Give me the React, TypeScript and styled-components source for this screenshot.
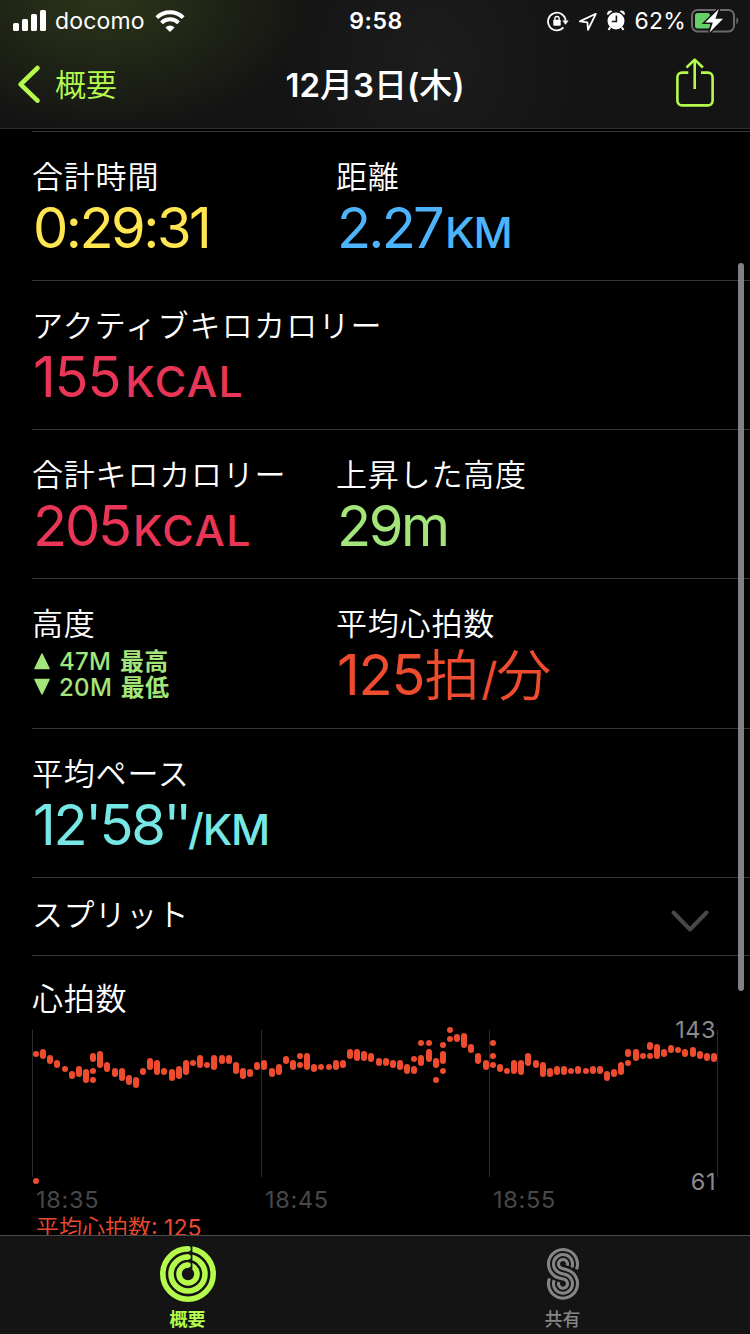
import React from "react";
import styled, { createGlobalStyle } from "styled-components";

const GlobalStyle = createGlobalStyle`
  * { box-sizing: border-box; }
  body {
    margin: 0;
    background: #000;
    font-family: Inter, "Noto Sans CJK JP", sans-serif;
    color: #fff;
  }
`;

const LIME = "#b4fb4c";

const Screen = styled.div`
  position: relative;
  display: flex;
  flex-direction: column;
  width: 750px;
  height: 1334px;
  overflow: hidden;
  background: #000;
`;

const Header = styled.header`
  flex: none;
  height: 129px;
  border-bottom: 1px solid #2c2c2c;
  background:
    radial-gradient(ellipse 210px 130px at 105px 0, rgba(52, 64, 26, 0.75), rgba(52, 64, 26, 0)),
    radial-gradient(ellipse 150px 160px at 430px 60px, rgba(34, 34, 34, 0.6), rgba(34, 34, 34, 0)),
    #141414;
`;

const StatusBar = styled.div`
  display: grid;
  grid-template-columns: 1fr auto 1fr;
  align-items: center;
  height: 40px;
  padding: 0 11px 0 13px;
  font-size: 23px;
  line-height: 42px;
`;

const StatusGroup = styled.div<{ $end?: boolean }>`
  display: flex;
  align-items: center;
  justify-content: ${(p) => (p.$end ? "flex-end" : "flex-start")};
  height: 40px;
  svg { flex: none; }
`;

const Carrier = styled.span`
  margin: 0 10px 0 8px;
  letter-spacing: 0.15px;
`;

const Clock = styled.span`
  font-weight: 600;
  letter-spacing: 0.6px;
`;

const StatusIcons = styled.div`
  display: flex;
  gap: 9px;
  margin-right: 10px;
`;

const Percent = styled.span`
  margin-right: 5px;
  letter-spacing: 0.2px;
`;

const NavBar = styled.nav`
  display: grid;
  grid-template-columns: 1fr auto 1fr;
  align-items: center;
  height: 88px;
  padding: 0 17px;
`;

const BackButton = styled.div`
  display: flex;
  align-items: center;
  gap: 13px;
  color: ${LIME};
  font-size: 31px;
  font-weight: 350;
  line-height: 44px;
  span { padding-top: 2px; }
`;

const Title = styled.h1`
  margin: 0;
  font-size: 33px;
  font-weight: 600;
  line-height: 44px;
`;

const Kanji = styled.span<{ $weight?: number }>`
  font-family: "Noto Sans CJK JP", sans-serif;
  font-weight: ${(p) => p.$weight ?? 500};
`;

const ShareButton = styled.div`
  justify-self: end;
  height: 50px;
  margin: -2px 18px 0 0;
`;

const Content = styled.main`
  flex: 1;
  min-height: 0;
  overflow: hidden;
  padding: 2px 0 0 32px;
`;

const MetricRow = styled.section<{ $height: number }>`
  display: grid;
  grid-template-columns: 304px 1fr;
  height: ${(p) => p.$height}px;
  border-top: 1px solid #363638;
  padding-top: 24px;
`;

const Label = styled.div<{ $track?: number }>`
  font-family: "Noto Sans CJK JP", sans-serif;
  font-size: 31px;
  font-weight: 350;
  line-height: 38px;
  letter-spacing: ${(p) => p.$track ?? 0.8}px;
  white-space: nowrap;
`;

const Value = styled.div<{ $color: string; $track?: number }>`
  padding: 1px 0 0 1px;
  color: ${(p) => p.$color};
  font-size: 56px;
  line-height: 66px;
  letter-spacing: ${(p) => p.$track ?? -1.2}px;
  white-space: nowrap;
`;

const Unit = styled.span<{ $track?: number; $gap?: number }>`
  margin-left: ${(p) => p.$gap ?? 3}px;
  font-size: 43px;
  font-weight: 450;
  letter-spacing: ${(p) => p.$track ?? 1.4}px;
`;

const Slash = styled.span`
  margin: 0 0 0 3px;
  font-size: 45px;
`;

const Seconds = styled.span`
  letter-spacing: -5px;
`;

const KanjiUnit = styled.span`
  font-weight: 350;
  font-size: 55px;
  line-height: 1;
`;

const Extremes = styled.div`
  padding-top: 7px;
  color: #a3e57a;
`;

const Extreme = styled.div`
  display: flex;
  align-items: center;
  gap: 9px;
  height: 26px;
  padding-left: 2px;
  font-size: 24px;
  font-weight: 500;
  line-height: 26px;
  letter-spacing: 0.3px;
  word-spacing: 2px;
  white-space: nowrap;
`;

const SplitRow = styled.section`
  display: flex;
  justify-content: space-between;
  height: 78px;
  border-top: 1px solid #363638;
  padding: 16px 41px 0 0;
  svg { margin-top: 15px; }
`;

const ChartSection = styled.section`
  border-top: 1px solid #363638;
  padding-top: 22px;
`;

const ChartArea = styled.div`
  position: relative;
  width: 686px;
  height: 168px;
  margin-top: 2px;
  svg { display: block; overflow: visible; }
`;

const AxisValue = styled.span<{ $top: number }>`
  position: absolute;
  top: ${(p) => p.$top}px;
  right: 2px;
  color: #8a8a8d;
  font-size: 23.5px;
  line-height: 28px;
  letter-spacing: 0.5px;
`;

const TimeAxis = styled.div`
  display: grid;
  grid-template-columns: 229px 228px 1fr;
  padding-left: 4px;
  color: #48484a;
  font-size: 23.5px;
  line-height: 28px;
  letter-spacing: 0.7px;
`;

const Average = styled.div`
  padding-left: 4px;
  color: #ea4a2e;
  font-size: 23px;
  font-weight: 350;
  line-height: 28px;
  white-space: nowrap;
  span { font-weight: 400; }
`;

const ScrollThumb = styled.div`
  position: absolute;
  top: 263px;
  right: 6px;
  width: 6px;
  height: 728px;
  border-radius: 3px;
  background: rgba(140, 140, 143, 0.92);
`;

const TabBar = styled.footer`
  flex: none;
  display: grid;
  grid-template-columns: 1fr 1fr;
  height: 99px;
  border-top: 1px solid #4a4a4c;
  background: #141414;
`;

const Tab = styled.div<{ $active?: boolean }>`
  display: flex;
  flex-direction: column;
  align-items: center;
  padding-top: 9px;
  color: ${(p) => (p.$active ? LIME : "#858585")};
  font-family: "Noto Sans CJK JP", sans-serif;
  font-size: 18px;
  font-weight: ${(p) => (p.$active ? 700 : 500)};
  line-height: 26px;
  svg { margin-bottom: 2px; }
`;

/* Each entry is one time slot holding [top, bottom] ranges, in thirds of a pixel. */
const beats: number[][][] = [
  [[123, 141], [504, 522]], [[117, 147]], [[135, 162]], [[150, 174]], [[168, 186]], [[183, 207]],
  [[168, 201]], [[177, 219]], [[129, 156], [174, 192], [201, 219]], [[123, 174]], [[156, 186]],
  [[174, 201]], [[174, 213]], [[195, 225]], [[201, 234]], [[174, 195]], [[144, 180]], [[150, 195]],
  [[174, 195]], [[177, 213]], [[168, 207]], [[150, 195]], [[150, 168]], [[135, 174]], [[156, 174]],
  [[135, 180]], [[135, 162]], [[135, 162]], [[156, 192]], [[174, 207]], [[177, 201]], [[156, 180]],
  [[150, 180]], [[174, 201]], [[162, 195]], [[138, 162]], [[150, 180]], [[129, 147], [156, 174]],
  [[129, 180]], [[162, 186]], [[162, 180]], [[162, 180]], [[150, 180]], [[150, 174]], [[117, 147]],
  [[117, 153]], [[123, 153]], [[129, 156]], [[144, 168]], [[144, 168]], [[150, 174]], [[150, 180]],
  [[162, 192]], [[138, 156], [168, 192]], [[90, 108], [135, 168]], [[90, 108], [117, 156]],
  [[144, 174], [201, 219]], [[96, 114], [123, 162], [174, 192]], [[51, 69], [78, 96]], [[72, 96]],
  [[69, 114]], [[102, 129]], [[129, 162]], [[150, 180]], [[90, 108], [129, 147], [156, 174]],
  [[162, 186]], [[174, 192]], [[150, 192]], [[150, 195]], [[129, 168]], [[150, 174]], [[156, 201]],
  [[174, 201]], [[168, 195]], [[168, 195]], [[174, 192]], [[168, 192]], [[174, 192]], [[168, 192]],
  [[168, 192]], [[183, 213]], [[177, 201]], [[156, 195]], [[117, 141], [150, 168]], [[117, 153]],
  [[129, 147]], [[96, 120], [129, 147]], [[102, 147]], [[117, 141]], [[105, 129]], [[111, 129]],
  [[117, 141]], [[111, 141]], [[123, 147]], [[129, 153]], [[129, 156]],
];

const HeartChart = () => (
  <svg width="686" height="168" viewBox="0 0 686 168">
    {[0, 229, 457, 685].map((x) => (
      <rect key={x} x={x} y="12" width="1" height="147" fill="#2b2b2d" />
    ))}
    {beats.flatMap((slot, i) =>
      slot.map(([a, b], j) => (
        <rect
          key={`${i}-${j}`}
          x={Math.round(4 + i * 7.137) - 3}
          y={a / 3 - 8}
          width="6"
          height={(b - a) / 3}
          rx="3"
          fill="#ee4b2f"
        />
      ))
    )}
  </svg>
);

const SignalIcon = () => (
  <svg width="34" height="40" fill="#fff">
    <rect x="0" y="22" width="6" height="8" rx="1.5" />
    <rect x="9" y="18" width="6" height="12" rx="1.5" />
    <rect x="18" y="13" width="6" height="17" rx="1.5" />
    <rect x="27" y="9" width="6" height="21" rx="1.5" />
  </svg>
);

const WifiIcon = () => (
  <svg width="30" height="40" fill="none" stroke="#fff" strokeWidth="4">
    <path d="M1.8 16.6a18.8 18.8 0 0 1 26.4 0" />
    <path d="M6.5 21.8a12 12 0 0 1 17 0" strokeWidth="3.8" />
    <path d="M15 31l-4.6-4.6a6.5 6.5 0 0 1 9.2 0z" fill="#fff" stroke="none" />
  </svg>
);

const RotationLockIcon = () => (
  <svg width="22" height="40" fill="none" stroke="#fff" strokeWidth="1.8">
    <path d="M16.4 26.4a8.8 8.8 0 1 1 2.2-6.8" />
    <path d="M15.4 19.4h6.2l-3.1 4.4z" fill="#fff" stroke="none" />
    <rect x="6.3" y="18.8" width="7.4" height="6" rx="0.8" fill="#fff" stroke="none" />
    <path d="M7.9 19.3v-1.7a2.1 2.1 0 0 1 4.2 0v1.7" strokeWidth="1.4" />
  </svg>
);

const LocationIcon = () => (
  <svg width="20" height="40" fill="none" stroke="#fff" strokeWidth="1.8" strokeLinejoin="round">
    <path d="M17.8 12.8L1.8 20.4l7.6.9.6 7.6z" />
  </svg>
);

const AlarmIcon = () => (
  <svg width="18" height="40">
    <circle cx="9" cy="20" r="8.5" fill="#fff" />
    <path d="M.6 14.2a3.2 3.2 0 0 1 4.8-4zM17.4 14.2a3.2 3.2 0 0 0-4.8-4z" fill="#fff" />
    <path d="M3.4 26.4L1.4 28.8M14.6 26.4l2 2.4" stroke="#fff" strokeWidth="2" />
    <path d="M9.4 14.5v6H4.8" fill="none" stroke="#181818" strokeWidth="1.6" />
  </svg>
);

const BatteryIcon = () => (
  <svg width="48" height="40">
    <rect x="1" y="9" width="42" height="21.4" rx="5.5" fill="none" stroke="#6b6b6b" strokeWidth="2" />
    <path d="M45.4 16.4c2.4 1 2.4 5.6 0 6.6z" fill="#6b6b6b" />
    <rect x="4" y="12" width="15" height="15.4" rx="2.5" fill="#65d06a" />
    <path
      d="M27.8 8L14.2 21.6h7.6L18.6 31.4L32 17.8h-7.6z"
      fill="#fff"
      stroke="#161616"
      strokeWidth="3"
      paintOrder="stroke"
    />
  </svg>
);

const BackIcon = () => (
  <svg width="25" height="44" fill="none" stroke={LIME} strokeWidth="4.6" strokeLinecap="round" strokeLinejoin="round">
    <path d="M20.5 6L3.6 22.3l16.9 16.3" />
  </svg>
);

const ShareIcon = () => (
  <svg width="40" height="50" fill="none" stroke={LIME} strokeWidth="2.6" strokeLinejoin="round">
    <path d="M13.3 14.6H7a4.6 4.6 0 0 0-4.6 4.6v23.6A4.6 4.6 0 0 0 7 47.4h26a4.6 4.6 0 0 0 4.6-4.6V19.2A4.6 4.6 0 0 0 33 14.6h-7" />
    <path d="M19.7 31V2M11.500 9.500L19.700 1.600l8.200 7.900" />
  </svg>
);

const ChevronDown = () => (
  <svg width="38" height="24" fill="none" stroke="#48484a" strokeWidth="4" strokeLinecap="round" strokeLinejoin="round">
    <path d="M2.5 3.5L19 20.5l16.5-17" />
  </svg>
);

const radii = [25.2, 17, 9];

const RingsIcon = () => (
  <svg width="58" height="58" viewBox="0 0 58 58">
    {radii.map((r) => (
      <circle key={r} cx="29" cy="29" r={r} fill="none" stroke={LIME} strokeWidth="5.6" />
    ))}
    <rect x="29" y="0" width="4.4" height="24" fill="#141414" />
    {radii.map((r) => (
      <circle key={r} cx="29" cy={29 - r} r="2.8" fill={LIME} />
    ))}
  </svg>
);

const sharingStrand = (upper: number, lower: number) => {
  const nx = -0.264;
  const ny = 0.9645;
  const [cx, top, bottom] = [17, 17, 36.7];
  const sweep = 0.38;
  const ux = cx + upper * Math.cos(sweep);
  const uy = top + upper * Math.sin(sweep);
  const lx = cx - lower * Math.cos(sweep);
  const ly = bottom - lower * Math.sin(sweep);
  return `M${ux} ${uy}A${upper} ${upper} 0 1 0 ${cx + upper * nx} ${top + upper * ny}L${cx - lower * nx} ${
    bottom - lower * ny
  }A${lower} ${lower} 0 1 1 ${lx} ${ly}`;
};

const SharingIcon = () => (
  <svg width="34" height="58" viewBox="0 -2 34 58" fill="none" stroke="#858585" strokeWidth="3.1">
    <path d={sharingStrand(14.5, 4.5)} />
    <path d={sharingStrand(9.5, 9.5)} />
    <path d={sharingStrand(4.5, 14.5)} />
  </svg>
);

const Triangle = ({ down }: { down?: boolean }) => (
  <svg width="16" height="18" fill="#a3e57a" stroke="#a3e57a" strokeWidth="1.5" strokeLinejoin="round">
    <path d={down ? "M1 1.5h14L8 16z" : "M1 16.5h14L8 2z"} />
  </svg>
);

export default function App() {
  return (
    <Screen>
      <GlobalStyle />
      <Header>
        <StatusBar>
          <StatusGroup>
            <SignalIcon />
            <Carrier>docomo</Carrier>
            <WifiIcon />
          </StatusGroup>
          <Clock>9:58</Clock>
          <StatusGroup $end>
            <StatusIcons>
              <RotationLockIcon />
              <LocationIcon />
              <AlarmIcon />
            </StatusIcons>
            <Percent>62%</Percent>
            <BatteryIcon />
          </StatusGroup>
        </StatusBar>
        <NavBar>
          <BackButton>
            <BackIcon />
            <span>概要</span>
          </BackButton>
          <Title>
            12<Kanji>月</Kanji>3<Kanji>日</Kanji>(<Kanji>木</Kanji>)
          </Title>
          <ShareButton>
            <ShareIcon />
          </ShareButton>
        </NavBar>
      </Header>

      <Content>
        <MetricRow $height={149}>
          <div>
            <Label>合計時間</Label>
            <Value $color="#ffe650" $track={-2.5}>0:29:31</Value>
          </div>
          <div>
            <Label>距離</Label>
            <Value $color="#4db3fa" $track={-2.8}>
              2.27<Unit $track={-1}>KM</Unit>
            </Value>
          </div>
        </MetricRow>
        <MetricRow $height={149}>
          <div>
            <Label $track={1.2}>アクティブキロカロリー</Label>
            <Value $color="#e93656">
              155<Unit $gap={5}>KCAL</Unit>
            </Value>
          </div>
        </MetricRow>
        <MetricRow $height={149}>
          <div>
            <Label>合計キロカロリー</Label>
            <Value $color="#e93656" $track={-2.2}>
              205<Unit>KCAL</Unit>
            </Value>
          </div>
          <div>
            <Label>上昇した高度</Label>
            <Value $color="#a3e57a" $track={-2.4}>29m</Value>
          </div>
        </MetricRow>
        <MetricRow $height={150}>
          <div>
            <Label>高度</Label>
            <Extremes>
              <Extreme>
                <Triangle />
                <span>
                  47M <Kanji $weight={700}>最高</Kanji>
                </span>
              </Extreme>
              <Extreme>
                <Triangle down />
                <span>
                  20M <Kanji $weight={700}>最低</Kanji>
                </span>
              </Extreme>
            </Extremes>
          </div>
          <div>
            <Label>平均心拍数</Label>
            <Value $color="#ee4b2f">
              125<KanjiUnit>拍</KanjiUnit>
              <Slash>/</Slash>
              <KanjiUnit>分</KanjiUnit>
            </Value>
          </div>
        </MetricRow>
        <MetricRow $height={149}>
          <div>
            <Label>平均ペース</Label>
            <Value $color="#76e7e4" $track={-2.4}>
              12'58<Seconds>''</Seconds>
              <Unit $track={-1.2} $gap={1}>/KM</Unit>
            </Value>
          </div>
        </MetricRow>
        <SplitRow>
          <Label $track={0.4}>スプリット</Label>
          <ChevronDown />
        </SplitRow>
        <ChartSection>
          <Label>心拍数</Label>
          <ChartArea>
            <HeartChart />
            <AxisValue $top={-2}>143</AxisValue>
            <AxisValue $top={150}>61</AxisValue>
          </ChartArea>
          <TimeAxis>
            <span>18:35</span>
            <span>18:45</span>
            <span>18:55</span>
          </TimeAxis>
          <Average>
            平均心拍数<span>: 125</span>
          </Average>
        </ChartSection>
      </Content>

      <TabBar>
        <Tab $active>
          <RingsIcon />
          概要
        </Tab>
        <Tab>
          <SharingIcon />
          共有
        </Tab>
      </TabBar>
      <ScrollThumb />
    </Screen>
  );
}
